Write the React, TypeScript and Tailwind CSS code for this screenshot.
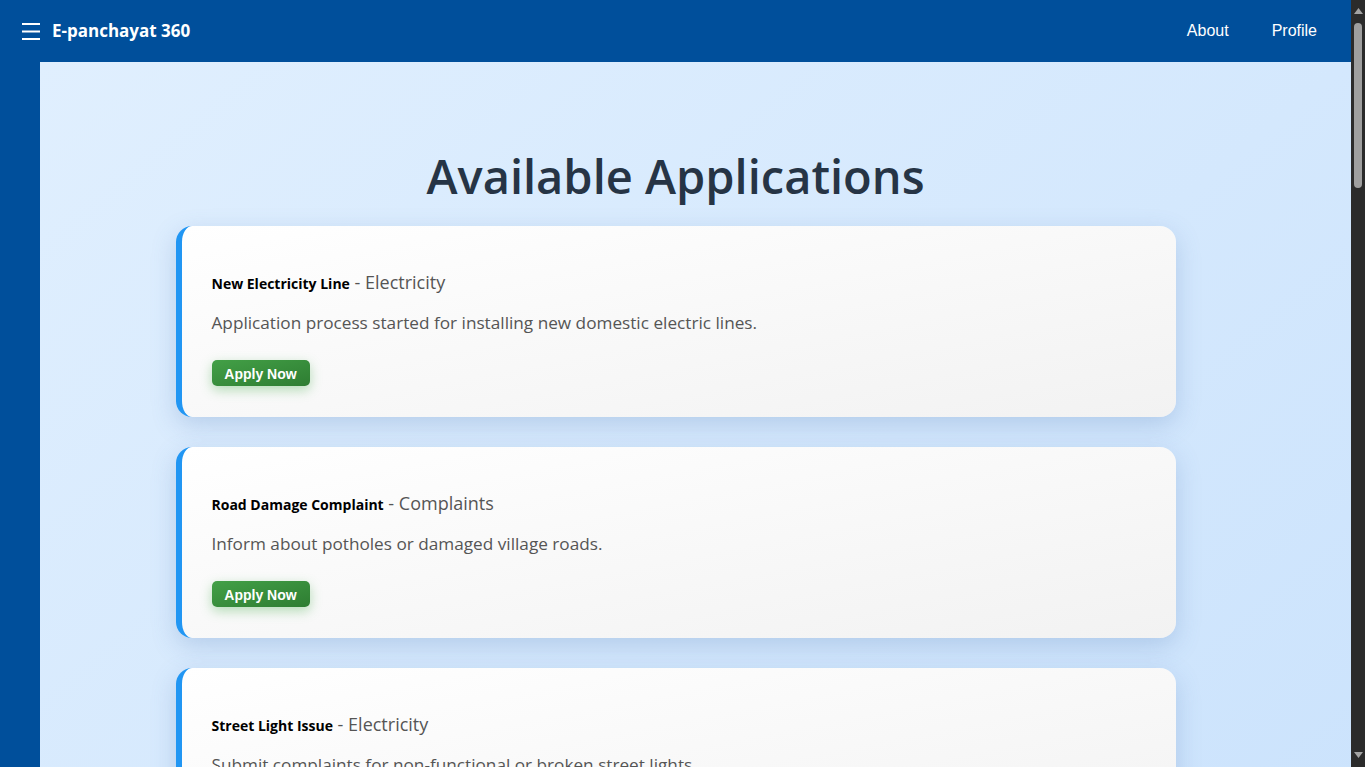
import React from "react";

// ===========================================================

const apps = [
    { title: "New Electricity Line", category: "Electricity", desc: "Application process started for installing new domestic electric lines." },
    { title: "Road Damage Complaint", category: "Complaints", desc: "Inform about potholes or damaged village roads." },
    { title: "Street Light Issue", category: "Electricity", desc: "Submit complaints for non-functional or broken street lights." },
    { title: "Water Supply Connection", category: "Water", desc: "Request a new drinking water connection for your household." },
];

function Header() {
    return (
        <header className="h-[62px] shrink-0 bg-[#004f9b] flex items-center justify-between pl-[22px] pr-[34px] text-white">
            <div className="flex items-center gap-[12px]">
                <svg width="18" height="18" viewBox="0 0 18 18" fill="none" stroke="white" strokeWidth="2">
                    <line x1="0" y1="2" x2="18" y2="2" />
                    <line x1="0" y1="9.5" x2="18" y2="9.5" />
                    <line x1="0" y1="17" x2="18" y2="17" />
                </svg>
                <span className="font-['Open_Sans',sans-serif] font-bold text-[17px]">E-panchayat 360</span>
            </div>
            <nav className="flex items-center gap-[43px] font-[family-name:'Liberation_Sans',Arial,sans-serif] text-[16px]">
                <a href="#">About</a>
                <a href="#">Profile</a>
            </nav>
        </header>
    )
}

function AppCard({ title, category, desc }: { title: string; category: string; desc: string }) {
    return (
        <div className="w-[1000px] rounded-[16px] border-l-[6px] border-[#2196f3] bg-gradient-to-br from-white to-[#f2f2f2] shadow-[0_8px_24px_rgba(80,120,180,0.25)] px-[30px] pt-[43px] pb-[31px]">
            <h3 className="leading-[27px]">
                <span className="text-[14px] font-bold text-black">{title}</span>
                <span className="text-[18px] text-[#555]"> - {category}</span>
            </h3>
            <p className="text-[17.2px] text-[#555] leading-[27px] mt-[12px]">{desc}</p>
            <button className="mt-[24px] h-[26px] w-[98px] rounded-[5px] bg-gradient-to-br from-[#43a047] to-[#2e7d32] shadow-[0_4px_12px_rgba(76,175,80,0.4)]">
                <span className="text-white font-bold text-[14px] font-[family-name:'Liberation_Sans',Arial,sans-serif]">Apply Now</span>
            </button>
        </div>
    )
}

function Scrollbar() {
    return (
        <div className="w-[14px] shrink-0 bg-[#2b2b2b] flex flex-col items-center">
            <svg width="9" height="6" viewBox="0 0 9 6" className="mt-[8px]">
                <polygon points="4.5,0 9,6 0,6" fill="#a3a3a3" />
            </svg>
            <div className="mt-[9px] w-[8px] h-[165px] rounded-full bg-[#9f9f9f]"></div>
            <div className="flex-1"></div>
            <svg width="9" height="6" viewBox="0 0 9 6" className="mb-[9px]">
                <polygon points="0,0 9,0 4.5,6" fill="#a3a3a3" />
            </svg>
        </div>
    )
}

export default function App() {
    return (
        <div className="h-screen flex overflow-hidden font-['Open_Sans',sans-serif]">
            <div className="flex-1 min-w-0 flex flex-col overflow-hidden">
                <Header />
                <div className="flex flex-1">
                    <aside className="w-[40px] shrink-0 bg-[#004f9b]"></aside>
                    <main className="flex-1 bg-gradient-to-br from-[#e0effe] to-[#c8e1fc] pr-[40px] pt-[82px] pb-[60px]">
                        <div className="w-[1000px] mx-auto flex flex-col items-center">
                            <h1 className="text-[47px] font-semibold text-[#263445] leading-[64px] mb-[18px]">Available Applications</h1>
                            <div className="flex flex-col gap-[30px]">
                                {apps.map((a) => (
                                    <AppCard key={a.title} {...a} />
                                ))}
                            </div>
                        </div>
                    </main>
                </div>
            </div>
            <Scrollbar />
        </div>
    )
}
